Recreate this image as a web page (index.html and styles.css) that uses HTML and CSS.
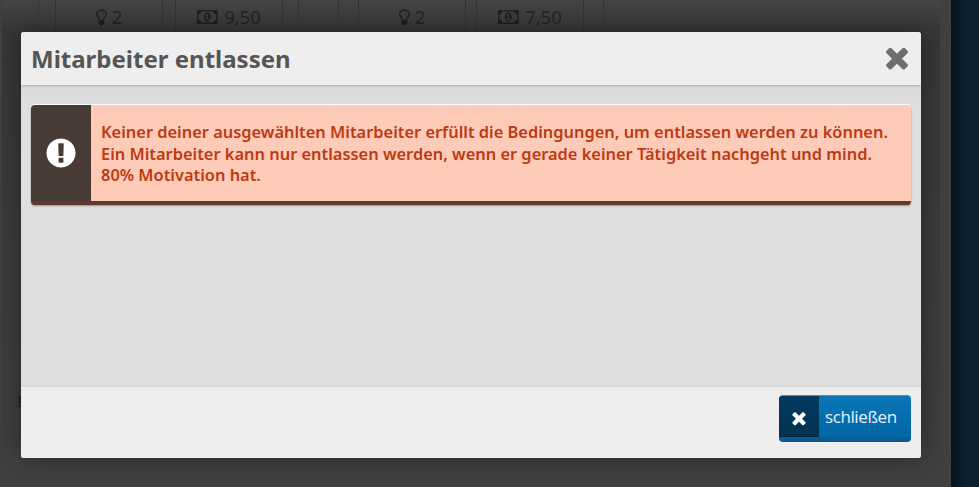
FILE: index.html
```html
<!DOCTYPE html>
<html lang="de">
<head>
  <meta charset="UTF-8">
  <title>Mitarbeiter entlassen</title>
  <link rel="stylesheet" href="styles.css">
</head>
<body>

  <div class="page">
    <div class="content">
      <div class="stats">
        <div class="spacer-a"></div>
        <div class="stat"><svg class="bulb" viewBox="0 0 1024 1792"><path d="M736 576q0 13-9.5 22.5t-22.5 9.5-22.5-9.5-9.5-22.5q0-46-54-71t-106-25q-13 0-22.5-9.5t-9.5-22.5 9.5-22.5 22.5-9.5q50 0 99.5 16t87 54 37.5 90zm160 0q0-72-34.5-134t-90-101.5-123-62-136.5-22.5-136.5 22.5-123 62-90 101.5-34.5 134q0 101 68 180 10 11 30.5 33t30.5 33q128 153 141 298h228q13-145 141-298 10-11 30.5-33t30.5-33q68-79 68-180zm128 0q0 155-103 268-45 49-74.5 87t-59.5 95.5-34 107.5q47 28 47 82 0 37-25 64 25 27 25 64 0 52-45 81 13 23 13 47 0 46-31.5 71t-77.5 25q-20 44-60 70t-87 26-87-26-60-70q-46 0-77.5-25t-31.5-71q0-24 13-47-45-29-45-81 0-37 25-64-25-27-25-64 0-54 47-82-4-50-34-107.5t-59.5-95.5-74.5-87q-103-113-103-268 0-99 44.5-184.5t117-142 164-89 186.5-32.5 186.5 32.5 164 89 117 142 44.5 184.5z"/></svg> 2</div>
        <div class="stat"><svg class="money" viewBox="0 0 2048 1792"><path d="M768 1152h384v-96h-128v-448h-114l-148 137 77 80q42-37 55-57h2v288h-128v96zm512-256q0 70-21 142t-59.5 134-101.5 101-138 39-138-39-101.5-101-59.5-134-21-142 21-142 59.5-134 101.5-101 138-39 138 39 101.5 101 59.5 134 21 142zm512 256v-512q-106 0-181-75t-75-181h-1152q0 106-75 181t-181 75v512q106 0 181 75t75 181h1152q0-106 75-181t181-75zm128-832v1152q0 26-19 45t-45 19h-1792q-26 0-45-19t-19-45v-1152q0-26 19-45t45-19h1792q26 0 45 19t19 45z"/></svg> 9,50</div>
        <div class="spacer-b"></div>
        <div class="stat stat-tight"><svg class="bulb" viewBox="0 0 1024 1792"><path d="M736 576q0 13-9.5 22.5t-22.5 9.5-22.5-9.5-9.5-22.5q0-46-54-71t-106-25q-13 0-22.5-9.5t-9.5-22.5 9.5-22.5 22.5-9.5q50 0 99.5 16t87 54 37.5 90zm160 0q0-72-34.5-134t-90-101.5-123-62-136.5-22.5-136.5 22.5-123 62-90 101.5-34.5 134q0 101 68 180 10 11 30.5 33t30.5 33q128 153 141 298h228q13-145 141-298 10-11 30.5-33t30.5-33q68-79 68-180zm128 0q0 155-103 268-45 49-74.5 87t-59.5 95.5-34 107.5q47 28 47 82 0 37-25 64 25 27 25 64 0 52-45 81 13 23 13 47 0 46-31.5 71t-77.5 25q-20 44-60 70t-87 26-87-26-60-70q-46 0-77.5-25t-31.5-71q0-24 13-47-45-29-45-81 0-37 25-64-25-27-25-64 0-54 47-82-4-50-34-107.5t-59.5-95.5-74.5-87q-103-113-103-268 0-99 44.5-184.5t117-142 164-89 186.5-32.5 186.5 32.5 164 89 117 142 44.5 184.5z"/></svg> 2</div>
        <div class="stat stat-last"><svg class="money" viewBox="0 0 2048 1792"><path d="M768 1152h384v-96h-128v-448h-114l-148 137 77 80q42-37 55-57h2v288h-128v96zm512-256q0 70-21 142t-59.5 134-101.5 101-138 39-138-39-101.5-101-59.5-134-21-142 21-142 59.5-134 101.5-101 138-39 138 39 101.5 101 59.5 134 21 142zm512 256v-512q-106 0-181-75t-75-181h-1152q0 106-75 181t-181 75v512q106 0 181 75t75 181h1152q0-106 75-181t181-75zm128-832v1152q0 26-19 45t-45 19h-1792q-26 0-45-19t-19-45v-1152q0-26 19-45t45-19h1792q26 0 45 19t19 45z"/></svg> 7,50</div>
        <div class="spacer-c"></div>
      </div>
      <div class="row-label">F</div>
    </div>
  </div>
  <div class="side"></div>

  <div class="modal">
    <div class="modal-head">
      <h2>Mitarbeiter entlassen</h2>
      <svg class="modal-close" viewBox="0 0 1408 1792"><path d="M1298 1322q0 40-28 68l-136 136q-28 28-68 28t-68-28l-294-294-294 294q-28 28-68 28t-68-28l-136-136q-28-28-28-68t28-68l294-294-294-294q-28-28-28-68t28-68l136-136q28-28 68-28t68 28l294 294 294-294q28-28 68-28t68 28l136 136q28 28 28 68t-28 68l-294 294 294 294q28 28 28 68z"/></svg>
    </div>
    <div class="modal-body">
      <div class="alert">
        <div class="alert-icon">
          <svg viewBox="0 0 1536 1792"><path d="M768 128q209 0 385.5 103t279.5 279.5 103 385.5-103 385.5-279.5 279.5-385.5 103-385.5-103-279.5-279.5-103-385.5 103-385.5 279.5-279.5 385.5-103zm128 1247v-190q0-14-9-23.5t-22-9.5h-192q-13 0-23 10t-10 23v190q0 13 10 23t23 10h192q13 0 22-9.5t9-23.5zm-2-344l18-621q0-12-10-18-10-8-24-8h-220q-14 0-24 8-10 6-10 18l17 621q0 10 10 17.5t24 7.5h185q14 0 23.5-7.5t10.5-17.5z"/></svg>
        </div>
        <p class="alert-text">Keiner deiner ausgewählten Mitarbeiter erfüllt die Bedingungen, um entlassen werden zu können. Ein Mitarbeiter kann nur entlassen werden, wenn er gerade keiner Tätigkeit nachgeht und mind. 80% Motivation hat.</p>
      </div>
    </div>
    <div class="modal-foot">
      <button class="btn-close">
        <span class="btn-icon"><svg viewBox="0 0 1408 1792"><path d="M1298 1322q0 40-28 68l-136 136q-28 28-68 28t-68-28l-294-294-294 294q-28 28-68 28t-68-28l-136-136q-28-28-28-68t28-68l294-294-294-294q-28-28-28-68t28-68l136-136q28-28 68-28t68 28l294 294 294-294q28-28 68-28t68 28l136 136q28 28 28 68t-28 68l-294 294 294 294q28 28 28 68z"/></svg></span>
        <span class="btn-label">schließen</span>
      </button>
    </div>
  </div>

</body>
</html>
```

FILE: styles.css
```css
html, body {
  margin: 0;
  padding: 0;
  height: 100%;
  overflow: hidden;
}

body {
  display: flex;
  font-family: "Noto Sans", "Open Sans", sans-serif;
  background: #0b1e2d;
}

.page {
  width: 951px;
  height: 487px;
  flex: none;
  background: #404040;
}

.side {
  flex: 1;
  background: linear-gradient(90deg, #06121c, #0d2231 60%, #0b1e2d);
}

.content {
  width: 938px;
  height: 448px;
  margin-left: 2px;
  background: linear-gradient(180deg, #444 0, #363636 32px, #3e3e3e 100%);
}

.stats {
  display: flex;
  height: 32px;
  color: #222;
  font-family: "Open Sans", sans-serif;
  font-size: 18.5px;
}

.spacer-a {
  width: 36px;
  margin-right: 16px;
  border-right: 1px solid #383838;
}

.spacer-b {
  width: 41px;
  margin: 0 19px 0 3px;
  box-sizing: border-box;
  border-left: 1px solid #363636;
  border-right: 1px solid #363636;
}

.spacer-c {
  width: 19px;
  border-right: 1px solid #363636;
}

.stat {
  display: flex;
  align-items: flex-start;
  justify-content: center;
  gap: 5px;
  width: 108px;
  height: 32px;
  margin-right: 12px;
  line-height: 34px;
  box-sizing: border-box;
  border-left: 1px solid #333;
  border-right: 1px solid #333;
}

.stat-tight {
  margin-right: 10px;
}

.stat-last {
  margin-right: 0;
}

.stats svg {
  fill: #1d1d1d;
  flex: none;
}

.bulb {
  width: 11px;
  height: 19px;
  margin-top: 8px;
}

.money {
  width: 22px;
  height: 20px;
  margin-top: 7px;
}

.row-label {
  margin-top: 360px;
  padding-left: 15px;
  font-family: "Liberation Serif", serif;
  font-size: 17px;
  line-height: 20px;
  color: #222;
}

.modal {
  position: absolute;
  left: 21px;
  top: 32px;
  width: 900px;
  height: 426px;
  display: flex;
  flex-direction: column;
  border-radius: 3px;
  background: #eee;
  box-shadow: 0 0 24px rgba(0, 0, 0, 0.35);
  overflow: hidden;
}

.modal-head {
  height: 53px;
  flex: none;
  display: flex;
  align-items: center;
  justify-content: space-between;
  padding: 0 11px 0 10px;
  box-sizing: border-box;
  background: #eee;
  box-shadow: 0 1px 2px rgba(0, 0, 0, 0.2);
  position: relative;
}

.modal-head h2 {
  margin: 0;
  font-size: 24px;
  font-weight: 700;
  color: #555;
}

.modal-close {
  width: 26px;
  height: 33px;
  fill: #6e6e6e;
  margin-top: -2px;
}

.modal-body {
  flex: 1;
  padding: 20px 10px;
  background: linear-gradient(180deg, #d9d9d9 0, #dedede 20px, #dedede 100%);
}

.alert {
  display: flex;
  height: 100px;
  box-sizing: border-box;
  border-bottom: 4px solid #5c3a2e;
  border-radius: 4px;
  background: #ffcbb9;
  box-shadow: 0 -1px 0 #fff, 0 1px 2px rgba(0, 0, 0, 0.35);
  overflow: hidden;
}

.alert-icon {
  width: 60px;
  flex: none;
  display: flex;
  align-items: center;
  justify-content: center;
  background: #483a34;
  box-shadow: 0 4px 0 #1e110c;
}

.alert-icon svg {
  width: 30px;
  height: 34px;
  fill: #fff;
}

.alert-text {
  margin: 0;
  padding: 16px 10px 0;
  font-size: 16.4px;
  font-weight: 600;
  line-height: 21.5px;
  color: #bc3a12;
}

.modal-foot {
  height: 73px;
  flex: none;
  display: flex;
  justify-content: flex-end;
  padding: 8px 10px 0;
  box-sizing: border-box;
  border-top: 2px solid #d8d8d8;
  background: #eee;
}

.btn-close {
  display: flex;
  width: 132px;
  height: 47px;
  padding: 0;
  border: 0;
  border-top: 1px solid #3d94cf;
  border-bottom: 5px solid #0b5a94;
  border-radius: 4px;
  background: linear-gradient(180deg, #0a76b8, #0066a6);
  overflow: hidden;
  color: #e6f3fb;
  font-family: "Open Sans", sans-serif;
  font-size: 17px;
}

.btn-icon {
  width: 40px;
  height: 47px;
  margin-top: -1px;
  flex: none;
  display: flex;
  align-items: center;
  justify-content: center;
  background: linear-gradient(180deg, #053a5f 0, #02324f 41px, #01233b 41px);
}

.btn-icon svg {
  width: 16px;
  height: 20px;
  margin-top: -2px;
  fill: #fff;
}

.btn-label {
  flex: 1;
  line-height: 41px;
  text-align: left;
  padding-left: 6px;
  letter-spacing: -0.4px;
}
```
